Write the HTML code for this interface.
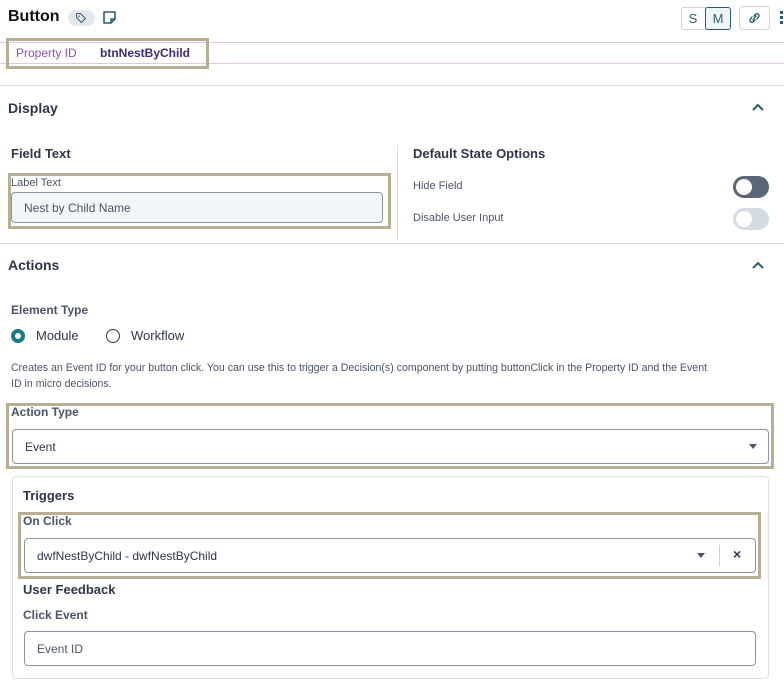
<!DOCTYPE html>
<html><head><meta charset="utf-8"><style>
*{box-sizing:border-box;margin:0;padding:0}
body{width:784px;height:683px;background:#fff;font-family:"Liberation Sans",sans-serif;position:relative;overflow:hidden;color:#1a202c}
.a{position:absolute;white-space:nowrap}
.hl{position:absolute;border:3px solid #b8ae94}
.h{font-weight:bold;font-size:14px;color:#2d3748}
.lbl{font-weight:bold;font-size:12px;color:#4a5568}
.inp{position:absolute;border:1px solid #8a95a3;border-radius:4px;background:#fff;font-size:12px;color:#2d3748;padding-left:12px;display:flex;align-items:center}
.line{position:absolute;left:0;width:784px;height:1px}
.tog{position:absolute;width:36px;height:22px;border-radius:11px}
.tog::after{content:"";position:absolute;left:3px;top:3px;width:16px;height:16px;border-radius:50%;background:#fff}
.caret{position:absolute;width:0;height:0;border-left:4px solid transparent;border-right:4px solid transparent;border-top:5px solid #4a5568}
</style></head><body>
<div class="a" style="left:8px;top:8px;font-size:16px;font-weight:bold;color:#111">Button</div>
<div class="a" style="left:68px;top:10px;width:27px;height:16px;border-radius:8px;background:#e2e8f0"></div>
<svg class="a" style="left:75px;top:12px" width="12" height="12" viewBox="0 0 12 12"><path d="M1.5 2v3.5l5 5 4-4-5-5H2z" fill="none" stroke="#4a5568" stroke-width="1"/><circle cx="4" cy="4.2" r=".8" fill="#4a5568"/></svg>
<svg class="a" style="left:102px;top:10px" width="15" height="15" viewBox="0 0 15 15"><path d="M2 2h11v7l-4 4H2z M9 13V9h4" fill="none" stroke="#2c5d6e" stroke-width="1.6" stroke-linejoin="round"/></svg>
<div class="a" style="left:681px;top:7px;width:50px;height:23px;border:1px solid #c9d6de;border-radius:3px"></div>
<div class="a" style="left:681px;top:8px;width:24px;font-size:13px;color:#2c5d6e;text-align:center;line-height:21px">S</div>
<div class="a" style="left:705px;top:7px;width:26px;height:23px;border:1px solid #2c5d6e;border-radius:3px;background:#eef6fa;font-size:13px;color:#2c5d6e;text-align:center;line-height:21px">M</div>
<div class="a" style="left:739px;top:6px;width:31px;height:24px;border:1px solid #c9d6de;border-radius:4px"></div>
<svg class="a" style="left:747px;top:11px" width="15" height="14" viewBox="0 0 15 14"><path d="M6 9l3-4 M5 6l-2 3a2 2 0 0 0 3 2l2-2 M10 8l2-3a2 2 0 0 0-3-2L7 5" fill="none" stroke="#2c5d6e" stroke-width="1.4" stroke-linecap="round"/></svg>
<div class="a" style="left:780px;top:11px;width:3px;height:3px;background:#2c5d6e;box-shadow:0 5px 0 #2c5d6e,0 10px 0 #2c5d6e"></div>
<div class="line" style="top:42px;background:#dfc6ee"></div>
<div class="line" style="top:63px;background:#dfc6ee"></div>
<div class="hl" style="left:6px;top:38px;width:203px;height:31px"></div>
<div class="a" style="left:16px;top:46px;font-size:12px;color:#8e4fb5">Property ID</div>
<div class="a" style="left:100px;top:46px;font-size:12px;font-weight:bold;color:#3d2a7a">btnNestByChild</div>
<div class="line" style="top:85px;background:#d6dde4"></div>
<div class="a h" style="left:8px;top:100px;font-size:14px">Display</div>
<svg class="a" style="left:751px;top:102px" width="14" height="10" viewBox="0 0 14 10"><path d="M2 8l5-5 5 5" fill="none" stroke="#2c5d6e" stroke-width="2"/></svg>
<div class="a h" style="left:11px;top:146px;font-size:13px">Field Text</div>
<div class="a" style="left:397px;top:145px;width:1px;height:95px;background:#d6dde4"></div>
<div class="hl" style="left:8px;top:173px;width:383px;height:56px"></div>
<div class="a" style="left:11px;top:177px;font-size:11px;color:#4a5568">Label Text</div>
<div class="inp" style="left:11px;top:192px;width:372px;height:31px;background:#f3f6f9;color:#4a5568">Nest by Child Name</div>
<div class="a h" style="left:413px;top:146px;font-size:13px">Default State Options</div>
<div class="a" style="left:413px;top:180px;font-size:11px;color:#4a5568">Hide Field</div>
<div class="tog" style="left:733px;top:176px;background:#5b6678"></div>
<div class="a" style="left:413px;top:212px;font-size:11px;color:#4a5568">Disable User Input</div>
<div class="tog" style="left:733px;top:208px;background:#d3dce5"></div>
<div class="line" style="top:243px;background:#d6dde4"></div>
<div class="a h" style="left:8px;top:257px">Actions</div>
<svg class="a" style="left:751px;top:260px" width="14" height="10" viewBox="0 0 14 10"><path d="M2 8l5-5 5 5" fill="none" stroke="#2c5d6e" stroke-width="2"/></svg>
<div class="a lbl" style="left:11px;top:303px">Element Type</div>
<div class="a" style="left:11px;top:329px;width:14px;height:14px;border-radius:50%;border:4px solid #1f7a85"></div>
<div class="a" style="left:36px;top:328px;font-size:13px;color:#2d3748">Module</div>
<div class="a" style="left:106px;top:329px;width:14px;height:14px;border-radius:50%;border:1px solid #2d3748"></div>
<div class="a" style="left:131px;top:328px;font-size:13px;color:#2d3748">Workflow</div>
<div class="a" style="left:11px;top:360px;font-size:10.6px;color:#4a5568;line-height:16px">Creates an Event ID for your button click. You can use this to trigger a Decision(s) component by putting buttonClick in the Property ID and the Event<br>ID in micro decisions.</div>
<div class="hl" style="left:6px;top:403px;width:768px;height:66px"></div>
<div class="a lbl" style="left:11px;top:405px">Action Type</div>
<div class="inp" style="left:12px;top:429px;width:757px;height:35px">Event</div>
<div class="caret" style="left:749px;top:444px"></div>
<div class="a" style="left:12px;top:476px;width:757px;height:203px;border:1px solid #dbe3ea;border-radius:4px"></div>
<div class="a h" style="left:23px;top:488px;font-size:13px">Triggers</div>
<div class="hl" style="left:18px;top:512px;width:743px;height:67px"></div>
<div class="a lbl" style="left:23px;top:514px">On Click</div>
<div class="inp" style="left:24px;top:538px;width:732px;height:35px">dwfNestByChild - dwfNestByChild</div>
<div class="caret" style="left:697px;top:553px"></div>
<div class="a" style="left:719px;top:545px;width:1px;height:21px;background:#cbd2d9"></div>
<div class="a" style="left:733px;top:546px;font-size:14px;color:#2d3748;font-weight:bold">×</div>
<div class="a h" style="left:23px;top:582px;font-size:13px">User Feedback</div>
<div class="a lbl" style="left:23px;top:608px">Click Event</div>
<div class="inp" style="left:24px;top:631px;width:732px;height:35px;color:#4a5568">Event ID</div>
</body></html>
